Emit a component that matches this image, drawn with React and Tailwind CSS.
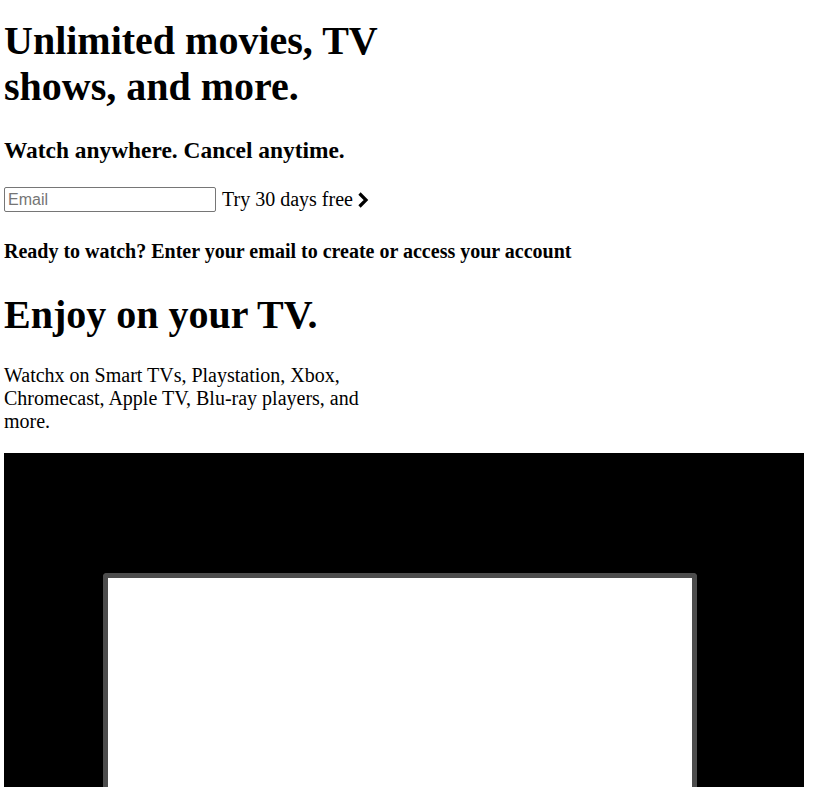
export default function App() {
  return (
    <div className="min-h-screen bg-white text-black font-['Liberation_Serif',serif] px-1">
      <div className="max-w-[400px]">
        <h1 className="text-[40px] font-bold leading-[46px] pt-[18px]">
          Unlimited movies, TV shows, and more.
        </h1>
        <h2 className="text-[23.4px] font-bold leading-[27px] mt-[27px]">
          Watch anywhere. Cancel anytime.
        </h2>
      </div>
      <form className="flex items-center mt-[21px]" onSubmit={(e) => e.preventDefault()}>
        <input
          type="email"
          placeholder="Email"
          className="w-[212px] h-[25px] border border-[#767676] rounded-[2px] px-[3px] text-[16px] font-['Liberation_Sans',sans-serif] placeholder:text-[#757575] mt-[2px]"
        />
        <button type="submit" className="flex items-center ml-[6px] text-[20px] leading-[23px] mt-[2px]">
          Try 30 days free
          <svg width="12" height="16" viewBox="0 0 12 16" className="ml-[4px]">
            <path d="M2.5 1.5 L9 8 L2.5 14.5" fill="none" stroke="black" strokeWidth="3.2" />
          </svg>
        </button>
      </form>
      <p className="text-[20px] font-bold leading-[23px] mt-[28px]">
        Ready to watch? Enter your email to create or access your account
      </p>
      <div className="max-w-[400px]">
        <h2 className="text-[40px] font-bold leading-[46px] mt-[29px]">Enjoy on your TV.</h2>
        <p className="text-[20px] leading-[23px] mt-[26px]">
          Watchx on Smart TVs, Playstation, Xbox, Chromecast, Apple TV, Blu-ray players, and more.
        </p>
      </div>
      <div className="w-[800px] h-[400px] bg-black mt-[20px] flex pt-[120px] pl-[99px]">
        <div className="w-[594px] h-[300px] bg-white border-[5px] border-b-0 border-[#4d4d4d] rounded-t-[4px]"></div>
      </div>
    </div>
  );
}
